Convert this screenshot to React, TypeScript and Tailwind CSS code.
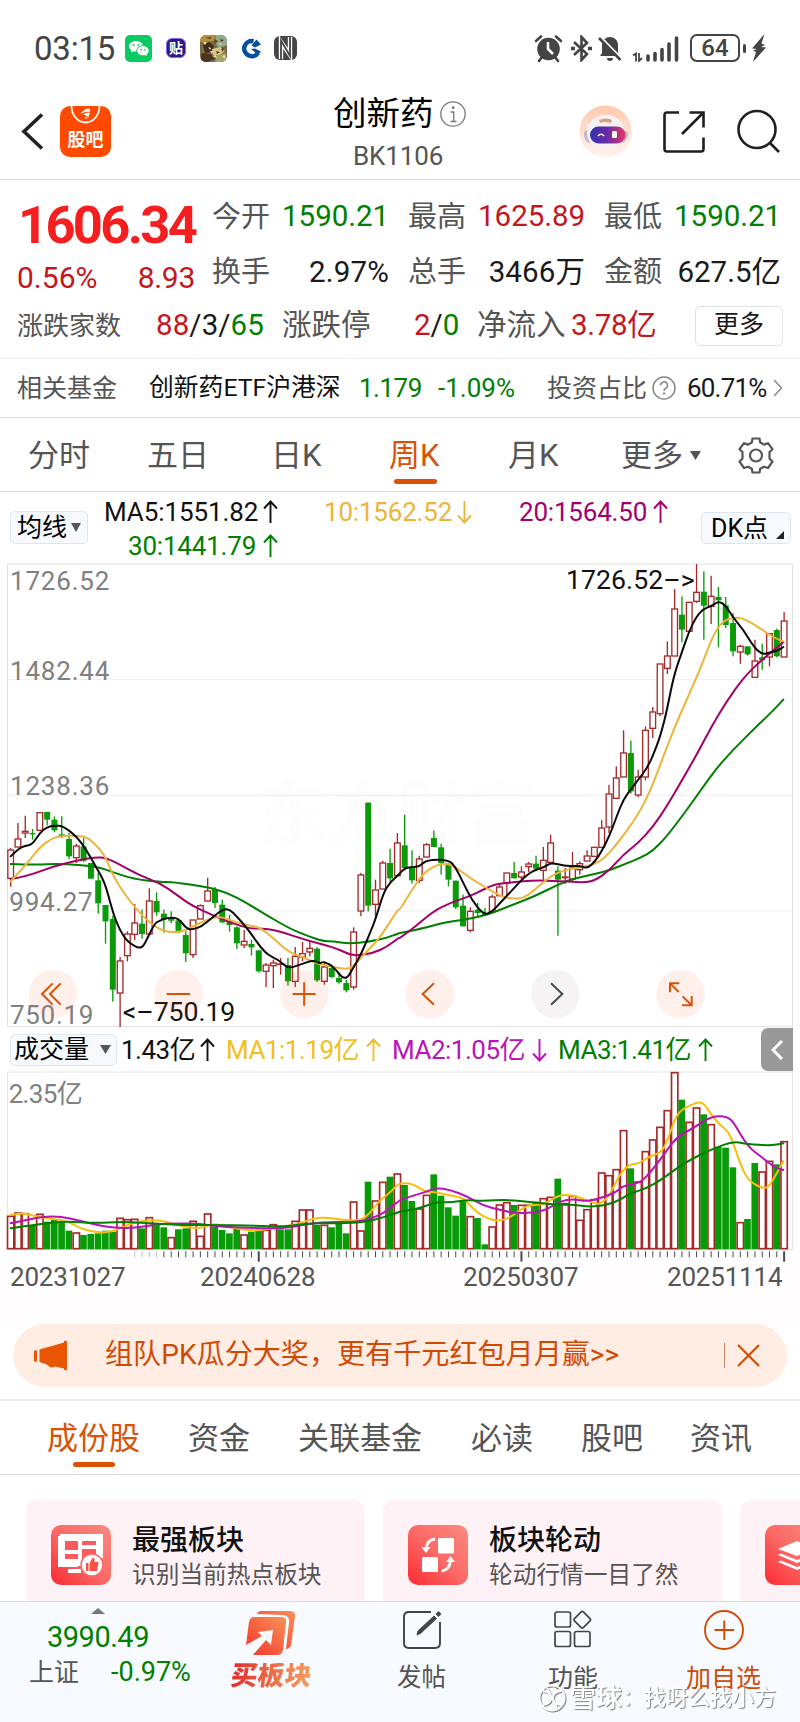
import React from "react";

type Candle = ["r" | "g", number, number, number, number];

/* Candles: direction, body top, body bottom, high, low (chart units, three per pixel). */
const EARLY: Candle[] = [
  ["r", 211, 296, 205, 321], ["r", 178, 202, 130, 202], ["r", 155, 160, 108, 175], ["g", 160, 164, 148, 180],
  ["r", 99, 152, 99, 152], ["g", 97, 120, 97, 137], ["g", 120, 152, 110, 158], ["g", 164, 170, 110, 175],
  ["g", 178, 230, 160, 238], ["r", 199, 234, 192, 250], ["g", 200, 243, 175, 247], ["g", 250, 297, 250, 297],
  ["g", 302, 371, 280, 402], ["g", 376, 425, 376, 492], ["g", 418, 630, 408, 666], ["r", 544, 640, 532, 742],
  ["r", 463, 528, 455, 545], ["r", 430, 464, 373, 482], ["g", 432, 463, 390, 477], ["r", 364, 463, 326, 463],
  ["g", 364, 398, 338, 408], ["g", 402, 420, 390, 459], ["g", 417, 423, 395, 431], ["g", 422, 455, 418, 460],
  ["g", 466, 521, 455, 547], ["r", 421, 525, 421, 535], ["r", 378, 418, 374, 418], ["r", 334, 364, 294, 364],
  ["g", 328, 370, 322, 385], ["g", 375, 428, 360, 430], ["g", 425, 436, 405, 456], ["g", 443, 491, 440, 508],
  ["r", 485, 496, 450, 505], ["g", 493, 503, 480, 528], ["g", 512, 575, 512, 579], ["r", 556, 575, 550, 622],
  ["r", 550, 558, 540, 625], ["r", 553, 554, 535, 585], ["g", 556, 605, 534, 618], ["r", 530, 605, 502, 622],
  ["r", 522, 532, 487, 545], ["r", 506, 517, 482, 530], ["g", 507, 602, 502, 607], ["r", 562, 605, 545, 615],
  ["g", 565, 592, 555, 595], ["g", 595, 608, 578, 612], ["g", 610, 632, 600, 638], ["r", 457, 622, 443, 630],
  ["r", 286, 394, 280, 410], ["g", 69, 378, 69, 395], ["r", 331, 374, 300, 415], ["r", 250, 328, 243, 328],
  ["g", 250, 296, 207, 305], ["r", 190, 288, 160, 288],
];

const LATE: Candle[] = [
  ["g", 887, 955, 795, 960], ["g", 952, 992, 902, 1002], ["r", 928, 992, 918, 1000], ["r", 885, 922, 880, 922],
  ["g", 865, 892, 842, 892], ["g", 893, 940, 882, 975], ["g", 945, 990, 940, 1010], ["g", 993, 1073, 993, 1078],
  ["g", 1068, 1130, 1035, 1130], ["r", 1085, 1142, 1073, 1148], ["g", 1080, 1090, 1060, 1103], ["g", 1090, 1096, 1075, 1096],
  ["r", 1042, 1085, 1035, 1085], ["r", 1012, 1038, 1005, 1038], ["r", 970, 1000, 970, 1040], ["g", 970, 986, 937, 986],
  ["r", 967, 982, 950, 995], ["r", 943, 951, 937, 968], ["g", 942, 957, 918, 965], ["r", 932, 962, 892, 990],
  ["r", 880, 938, 855, 938], ["g", 963, 990, 950, 1158], ["r", 982, 984, 955, 1003], ["r", 955, 988, 907, 995],
  ["r", 942, 960, 935, 975], ["r", 919, 934, 902, 934], ["r", 893, 920, 893, 920], ["r", 835, 893, 812, 893],
  ["r", 733, 832, 705, 850], ["r", 685, 746, 650, 746], ["r", 610, 682, 542, 682], ["g", 610, 725, 573, 732],
  ["r", 682, 736, 660, 743], ["r", 542, 682, 530, 692], ["r", 487, 536, 472, 565], ["r", 343, 492, 343, 500],
  ["r", 319, 356, 275, 373], ["r", 178, 319, 118, 319], ["g", 195, 240, 140, 278], ["r", 158, 245, 158, 245],
  ["r", 128, 155, 43, 160], ["g", 126, 168, 65, 270], ["r", 140, 170, 78, 223], ["g", 142, 152, 112, 293],
  ["g", 167, 226, 142, 235], ["g", 220, 305, 190, 320], ["r", 290, 307, 285, 342], ["g", 290, 314, 290, 318],
  ["r", 334, 383, 270, 383], ["g", 323, 332, 282, 360], ["r", 252, 322, 252, 350], ["g", 241, 320, 237, 323],
  ["r", 214, 322, 187, 322],
];

const CANDLES: Candle[] = [
  ...EARLY.map(([d, a, b, h, l]): Candle => [d, a + 690, b + 690, h + 690, l + 690]),
  ...LATE,
];

/* Volume bars: direction and top edge. */
const VOL_EARLY =
  "r618 r608 r610 g645 r612 g635 g630 g635 g662 r668 g675 g672 g670 g662 g665 r624 r628 r627 g655 r622 g640 g652 r682 g658 g655 r633 r678 r611 g650 g660 g670 g657 r674 g665 g663 r660 r643 g658 g658 r633 r599 r599 g645 r645 g652 g642 g670 r575 r662 g515 r572 r516 g500 r491";
const VOL_LATE =
  "g735 g783 r806 r765 g703 g767 g802 g827 g780 r829 g834 g913 r860 r794 r787 g795 r795 r795 g785 r775 r771 g716 r790 r768 r840 r808 r778 r698 r706 r688 r571 g685 r725 r634 r599 r561 r511 r397 g479 r546 r503 g523 r553 g620 g623 g682 r847 g837 g669 r695 r663 g673 r604";

const VOLUMES = [
  ...VOL_EARLY.split(" ").map((v) => ({ up: v[0] === "r", top: Number(v.slice(1)) + 210 })),
  ...VOL_LATE.split(" ").map((v) => ({ up: v[0] === "r", top: Number(v.slice(1)) })),
];

function curve(a: string, b: string, shift: number) {
  const parse = (s: string) => s.split(" ").map((p) => p.split(",").map(Number));
  const pts = [
    ...parse(a).map(([x, y]) => [x, y + shift]),
    ...parse(b).map(([x, y]) => [x + 1200, y]),
  ].filter((p, i, all) => i === 0 || p[0] > all[i - 1][0]);
  let d = `M${pts[0][0]} ${pts[0][1]}`;
  for (let i = 1; i < pts.length - 1; i++) {
    const mx = (pts[i][0] + pts[i + 1][0]) / 2;
    const my = (pts[i][1] + pts[i + 1][1]) / 2;
    d += `Q${pts[i][0]} ${pts[i][1]} ${mx} ${my}`;
  }
  const last = pts[pts.length - 1];
  return d + `L${last[0]} ${last[1]}`;
}

const PRICE_LINES: [string, string][] = [
  ["#008000", curve(
    "32,253 100,256 180,252 290,260 340,278 400,298 480,307 520,307 620,322 680,338 740,370 800,407 870,447 920,468 970,485 1000,485 1045,492 1110,486 1160,475 1195,461",
    "0,1150 60,1138 140,1117 200,1110 270,1093 320,1072 400,1042 490,997 540,982 620,965 670,945 720,925 760,903 800,860 850,795 900,725 950,655 1000,600 1060,540 1115,487 1150,450", 690)],
  ["#a3006b", curve(
    "32,298 80,290 160,260 230,243 290,232 320,235 360,255 420,288 480,310 530,345 570,375 640,408 700,432 750,447 780,446 830,452 920,482 1000,502 1045,523 1070,528 1120,520 1160,502 1195,475",
    "0,1165 40,1135 100,1085 150,1060 200,1043 240,1025 280,1005 340,997 400,992 480,994 555,999 590,990 630,960 670,915 715,880 760,830 800,770 850,685 890,615 935,530 980,455 1030,385 1070,345 1110,310 1150,278", 690)],
  ["#ecb53a", curve(
    "32,305 60,275 90,240 120,202 150,180 180,168 240,168 265,175 300,208 320,240 340,290 370,338 410,390 450,430 490,455 540,459 580,440 620,420 660,410 700,425 740,436 780,443 820,475 865,517 910,533 960,555 1000,562 1045,570 1065,555 1100,515 1135,480 1165,435 1195,388",
    "0,1080 30,1030 70,970 105,948 140,940 170,955 210,985 260,1015 300,1040 345,1048 375,1043 410,1015 450,980 490,962 540,953 580,945 610,928 650,885 715,795 755,715 790,620 825,530 860,450 900,360 930,280 955,230 980,208 1020,202 1060,222 1100,250 1130,268 1150,275", 690)],
  ["#0a0a0a", curve(
    "32,230 54,208 75,198 97,195 119,160 141,142 163,137 190,140 230,170 260,212 290,265 315,310 335,385 350,430 370,470 390,492 425,510 445,470 465,430 480,423 500,414 535,414 560,448 580,449 605,440 635,415 670,388 690,390 710,410 745,450 795,522 835,540 865,567 900,555 940,541 960,552 970,545 1000,560 1035,605 1060,565 1085,520 1110,460 1128,415 1150,340 1170,308 1195,286",
    "0,970 15,955 36,952 60,950 80,930 145,930 165,950 190,1000 215,1050 250,1095 275,1088 300,1060 340,1018 375,980 405,960 430,955 453,938 495,950 540,948 562,957 585,935 605,905 630,855 650,800 670,750 692,720 715,690 745,650 770,590 785,545 800,485 822,375 845,310 867,245 890,200 910,178 933,170 955,155 975,165 1000,205 1030,240 1060,290 1086,315 1110,308 1130,305 1150,292", 690)],
];

const VOLUME_LINES: [string, string][] = [
  ["#f5bf0a", curve(
    "32,615 60,608 90,615 140,625 200,632 240,655 290,668 340,665 380,645 430,632 480,630 530,645 570,653 600,655 640,640 680,650 750,662 800,658 860,648 900,640 940,625 980,622 1030,630 1080,633 1110,610 1135,575 1165,552 1190,527",
    "0,730 35,730 80,757 100,755 140,765 190,773 210,797 250,832 300,845 340,827 380,795 430,795 475,765 520,765 570,785 600,795 630,765 660,700 690,672 715,672 750,648 785,638 805,595 825,535 845,508 890,487 910,488 935,525 960,555 985,575 1000,610 1020,670 1043,720 1085,745 1105,742 1125,710 1150,663", 210)],
  ["#b814b8", curve(
    "32,640 80,630 130,620 180,619 240,632 300,648 370,655 420,652 470,643 530,640 600,641 660,650 750,654 820,655 870,653 930,640 1000,635 1060,637 1110,627 1150,610 1180,585 1195,575",
    "0,780 40,767 80,755 110,743 150,750 200,768 250,797 300,810 350,820 400,818 440,810 480,783 520,777 560,785 610,772 650,755 670,737 715,730 740,710 780,660 830,590 880,565 920,537 950,528 980,530 1000,545 1043,620 1090,655 1120,680 1150,690", 210)],
  ["#008000", curve(
    "32,655 120,642 200,633 280,640 370,635 450,640 550,645 650,645 750,647 860,650 920,640 1010,640 1060,638 1100,635 1150,622 1195,607",
    "0,815 60,805 110,785 150,788 200,780 250,783 320,779 400,787 480,795 520,794 570,801 620,795 660,780 690,760 740,745 790,715 830,685 870,660 930,630 1000,604 1043,612 1110,617 1150,610", 210)],
];

const cx = (i: number) => 32 + i * 21.89;

function PriceChart() {
  return (
    <svg className="block h-[465px] w-[800px] overflow-visible" viewBox="0 40 2400 1395">
      <g stroke="#e2e2e2" strokeWidth="3" fill="none">
        <path d="M22.5 43.5H2377.5V1431H22.5Z" />
        <path stroke="#ededed" d="M22 390H2377M22 737H2377M22 1084H2377" />
      </g>
      <text x="770" y="870" fontSize="210" fontWeight="700" fill="#c04040" fillOpacity="0.01" className="font-['Noto_Sans_CJK_SC']">东方财富</text>
      <g fill="#808080" fontSize="78" className="font-[Roboto]">
        <text x="30" y="122" textLength="298">1726.52</text>
        <text x="30" y="390" textLength="298">1482.44</text>
        <text x="30" y="736" textLength="298">1238.36</text>
        <text x="28" y="1084" textLength="250">994.27</text>
        <text x="30" y="1424" textLength="250">750.19</text>
      </g>
      {CANDLES.map(([d, top, bot, hi, lo], i) => {
        const x = cx(i);
        return d === "r" ? (
          <g key={i} stroke="#a52a2a" strokeWidth="4" fill="#fff">
            <path d={`M${x} ${hi}V${lo}`} />
            <rect x={x - 8.5} y={top} width="17" height={Math.max(bot - top, 1)} />
          </g>
        ) : (
          <g key={i} fill="#0a9a0a">
            <rect x={x - 2} y={hi} width="4" height={lo - hi} />
            <rect x={x - 9} y={top} width="18" height={Math.max(bot - top, 4)} />
          </g>
        );
      })}
      <g fill="none" strokeWidth="6" strokeLinejoin="round" strokeLinecap="round">
        {PRICE_LINES.map(([c, d]) => <path key={c} stroke={c} d={d} />)}
      </g>
      <g fill="#111" fontSize="80" className="font-[Roboto]">
        <text x="1698" y="118" textLength="386">1726.52–&gt;</text>
        <text x="368" y="1414" textLength="338">&lt;–750.19</text>
      </g>
      <g fill="#ff5a1e" fillOpacity="0.09">
        <circle cx="159" cy="1333" r="73" /><circle cx="536" cy="1333" r="73" /><circle cx="913" cy="1333" r="73" />
        <circle cx="1289" cy="1333" r="73" /><circle cx="2042" cy="1333" r="73" />
        <circle cx="1666" cy="1333" r="73" fill="#50304a" fillOpacity="0.06" />
      </g>
      <g fill="none" stroke="#d95206" strokeWidth="6">
        <path d="M158 1301L126 1333L158 1365M182 1301L150 1333L182 1365" />
        <path d="M500 1333H570M878 1333H947M912.500 1298V1368" />
        <path d="M1302 1301L1268 1333L1302 1365" />
        <path d="M2036 1327L2010 1301M2010 1328V1301H2038M2048 1340L2074 1366M2046 1367H2075V1339" />
        <path stroke="#4a4a4a" d="M1653 1301L1687 1333L1653 1365" />
      </g>
    </svg>
  );
}

function VolumeChart() {
  return (
    <svg className="block h-[193px] w-[800px]" viewBox="0 393 2400 579">
      <path d="M22.5 396H2377.5V929H22.5Z" fill="none" stroke="#e6e6e6" strokeWidth="3" />
      <text x="26" y="488" textLength="222" fontSize="78" fill="#808080" className="font-[Roboto,'Noto_Sans_CJK_SC']">2.35亿</text>
      {VOLUMES.map(({ up, top }, i) => {
        const x = cx(i);
        return up ? (
          <rect key={i} x={x - 9.500} y={top + 1} width="19" height={925 - top} fill="#fff" stroke="#a52a2a" strokeWidth="5" />
        ) : (
          <rect key={i} x={x - 10.500} y={top} width="20" height={928 - top} fill="#089b08" />
        );
      })}
      <g fill="none" strokeWidth="6" strokeLinejoin="round" strokeLinecap="round">
        {VOLUME_LINES.map(([c, d]) => <path key={c} stroke={c} d={d} />)}
      </g>
      {VOLUMES.map((_, i) =>
        i < 17 ? null : (
          <path key={i} d={`M${cx(i)} 934V${i === 34 || i === 70 || i === 106 ? 965 : 952}`}
            stroke={i < 21 ? "#c4bcc2" : "#4a4a4a"} strokeWidth={i === 34 || i === 70 || i === 106 ? 6 : 3} />
        ),
      )}
    </svg>
  );
}

function StatusBar() {
  return (
    <header className="flex h-[82px] items-center pt-[14px] text-[#444]">
      <span className="ml-[34px] w-[83px] whitespace-nowrap text-[33px] leading-none tracking-[-0.2px]">03:15</span>
      <svg className="ml-[8px] size-[27px]" viewBox="0 0 27 27">
        <rect width="27" height="27" rx="5" fill="#0acb62" />
        <path d="M11 6c-4 0-7 2.300-7 5.300 0 1.700 1 3.100 2.500 4L6 17.500l2.400-1.200c1 .3 2 .3 2.800.3 0-4 3.300-6 6.800-6C17.500 8 14.500 6 11 6Z" fill="#fff" />
        <path d="M18 11.200c-3.300 0-5.800 2-5.800 4.500s2.500 4.600 5.800 4.600c.7 0 1.300-.1 1.900-.3l2.100 1-.5-1.900c1.300-.8 2.200-2 2.200-3.400 0-2.500-2.500-4.500-5.700-4.500Z" fill="#fff" />
        <g fill="#0acb62"><circle cx="8.600" cy="10" r="1" /><circle cx="13.300" cy="10" r="1" /><circle cx="16.100" cy="14.600" r=".9" /><circle cx="20" cy="14.600" r=".9" /></g>
      </svg>
      <div className="ml-[14px] flex h-[20px] w-[20px] items-center justify-center rounded-[6px] border border-[#8b63f0] bg-[#2b1c86] text-[14px] font-bold leading-none text-white">贴</div>
      <svg className="ml-[14px] size-[27px]" viewBox="0 0 27 27">
        <defs><clipPath id="thumb"><rect width="27" height="27" rx="6" /></clipPath></defs>
        <g clipPath="url(#thumb)">
          <rect width="27" height="27" fill="#7b6a45" />
          <path d="M0 0h16l-2 6-14 1Z" fill="#b98f3a" /><path d="M16 0h11v10l-8 3-4-5Z" fill="#93a98c" />
          <path d="M3 10l6-3 5 4-2 6-7 1Z" fill="#3e2c1c" /><path d="M12 14l8-2 5 4-5 4-7 0Z" fill="#d9c489" />
          <path d="M2 18l9 1 4 5-8 3H0Z" fill="#4c331d" /><path d="M17 20l9-2v9H15Z" fill="#a5a468" />
          <path d="M8 12l3 1-1 2zM18 9l3-1 1 2zM12 21l4-1 1 3zM3 7l4 0-2 3zM10 16l3 0-1 3zM22 21l3-1v4z" fill="#efe0b0" />
          <path d="M21 14l3-1-1 4zM5 3l6-1v2zM14 4l4 2-3 3zM20 4l4 1-3 2zM16 16l4 1-3 2z" fill="#55432a" />
        </g>
      </svg>
      <svg className="ml-[14px] size-[21px]" viewBox="0 0 21 21">
        <path d="M12.500 3.200A7.600 7.600 0 1 0 17 15" fill="none" stroke="#07509c" strokeWidth="4.500" />
        <path d="M15.500 1.500L20 6.500L14 9.500L10.500 7.500ZM10 11L14 10.500L20 13.500L17 17Z" fill="#07509c" />
      </svg>
      <svg className="ml-[11px] h-[26px] w-[25px]" viewBox="0 0 25 26">
        <rect x="1" y="1" width="23" height="24" rx="6" fill="#444" />
        <path d="M8 24V7L17 20V2" fill="none" stroke="#fff" strokeWidth="4.400" /><path d="M8 24V5.500L17 21V2" fill="none" stroke="#444" strokeWidth="1.800" />
      </svg>
      <svg className="ml-[236px] size-[29px]" viewBox="0 0 29 29">
        <circle cx="14.500" cy="15" r="11.300" fill="#444" />
        <path d="M14 8v7l5 5" stroke="#fff" strokeWidth="2.600" fill="none" />
        <path d="M2 7l5-4.500M27 7l-5-4.500M5 27l3-4M24 27l-3-4" stroke="#444" strokeWidth="2.600" strokeLinecap="round" />
      </svg>
      <svg className="ml-[8px] h-[27px] w-[21px]" viewBox="0 0 21 27" fill="none" stroke="#444" strokeWidth="2.600">
        <path d="M3 7l13 12-5.500 6v-23L16 8 3 20" /><path d="M0 13.500h4M17 13.500h4" strokeWidth="3.500" />
      </svg>
      <svg className="ml-[6px] h-[28px] w-[24px]" viewBox="0 0 24 28">
        <path d="M2 22l2-3v-8C4 6 8 3 12 3s8 3 8 8v8l2 3ZM9 24h6a3 3 0 0 1-6 0Z" fill="#444" />
        <path d="M2 2.500L24 25" stroke="#fff" strokeWidth="2.500" /><path d="M1 4L22.500 26" stroke="#444" strokeWidth="2.600" />
      </svg>
      <svg className="ml-[10px] h-[27px] w-[47px]" viewBox="0 0 47 27" stroke="#444" fill="none">
        <path d="M1 20.500l3-2v8M7 18v8l3-3" strokeWidth="1.800" />
        <path d="M16 25v-4M23 25v-6.500M30 25V14.500M37 25V9M44.500 25V3" strokeWidth="3.600" strokeLinecap="round" />
      </svg>
      <div className="ml-[11px] flex h-[28px] w-[50px] shrink-0 items-center justify-center rounded-[7px] border-2 border-[#444] text-[24px] font-medium leading-none">64</div>
      <div className="ml-[3px] h-[9px] w-[3px] shrink-0 rounded-sm bg-[#444]" />
      <svg className="ml-[6px] h-[28px] w-[14px] shrink-0" viewBox="0 0 14 28"><path d="M12.500 0L0 14.500l5 .5-4 1.500 3 1.500L1 28 14 13.500l-5-.5 4-2-3.500-1.500Z" fill="#444" /></svg>
    </header>
  );
}

function Header() {
  return (
    <div className="flex h-[98px] items-start border-b border-[#d9d9d9]">
      <svg className="ml-[20px] mt-[29px] h-[42px] w-[26px]" viewBox="0 0 26 42"><path d="M22 3.500L4 20.500L22 37.500" fill="none" stroke="#222" strokeWidth="3.600" /></svg>
      <svg className="ml-[14px] mt-[24px] size-[51px]" viewBox="0 0 51 51">
        <rect width="51" height="51" rx="10" fill="#ff4a00" />
        <path d="M11.500 0a14 16.500 0 0 0 28 0" fill="none" stroke="#fff" strokeWidth="1.800" />
        <path d="M20 8C23 4 27 2 30 2.500L30 6C26 5 23 7 20 8ZM23 9C26 6 29 6 30 7L28 12C27 9 25 9 23 9ZM24.500 11L27 11 26.500 13.500Z" fill="#fff" />
        <text x="7.500" y="40" fontSize="18" fontWeight="700" fill="#fff" textLength="36" className="font-['Noto_Sans_CJK_SC']">股吧</text>
      </svg>
      <div className="ml-[222px] w-[134px]">
        <div className="mt-[15px] flex h-[34px] items-center text-black">
          <span className="w-[101px] whitespace-nowrap text-[33.500px] leading-none">创新药</span>
          <svg className="ml-[6px] size-[26px] shrink-0" viewBox="0 0 26 26" fill="none" stroke="#777" strokeWidth="1.300">
            <circle cx="13" cy="13" r="12.200" /><circle cx="13.200" cy="6.700" r="1.400" fill="#777" stroke="none" /><path d="M10.500 11H13.700V20.500M10.500 20.500h6" />
          </svg>
        </div>
        <div className="ml-[20px] mt-[12px] whitespace-nowrap text-[26px] leading-none tracking-[-0.1px] text-[#555]">BK1106</div>
      </div>
      <svg className="ml-[112px] mt-[23px] size-[53px]" viewBox="0 0 53 53">
        <defs>
          <linearGradient id="halo" x2="0" y2="1"><stop stopColor="#ffc9ab" /><stop offset="1" stopColor="#fff5f0" /></linearGradient>
          <linearGradient id="visor"><stop stopColor="#3531b0" /><stop offset=".5" stopColor="#6b2aa8" /><stop offset="1" stopColor="#e43a60" /></linearGradient>
        </defs>
        <circle cx="26.500" cy="26.500" r="26" fill="url(#halo)" />
        <path d="M5 16l4 2v5ZM48 16l-4 2v5Z" fill="#efe7ee" />
        <path d="M5 29c0-3 2-4 5-4h32c5 0 7 2 7 4s-2 9-7 9H11c-4 0-6-5-6-9Z" fill="#bdb7ca" />
        <path d="M8 28C8 16 17 10 27 10s18 6 19 18c1 9-7 15-19 15S8 38 8 28Z" fill="#f4f1f5" />
        <path d="M20 15q7-3 13 0l-1 3q-6-2-11 0Z" fill="#d4a27c" />
        <rect x="11" y="21.500" width="35.500" height="17" rx="8.500" fill="url(#visor)" />
        <path d="M19 31q3-3.500 6 0" stroke="#fff" strokeWidth="1.600" fill="none" /><rect x="33" y="26" width="5" height="7" rx="1.500" fill="#fff" />
      </svg>
      <svg className="ml-[30px] mt-[28px] size-[44px]" viewBox="0 0 44 44" fill="none" stroke="#1f1f1f" strokeWidth="2.600">
        <path d="M17 2.500H5Q2.500 2.500 2.500 5V39Q2.500 41.500 5 41.500H39Q41.500 41.500 41.500 39V27.500" /><path d="M20 24L41 3M27.500 2.500H41.500V17.500" />
      </svg>
      <svg className="ml-[29px] mt-[26px] size-[46px]" viewBox="0 0 46 46" fill="none" stroke="#1f1f1f" strokeWidth="2.600">
        <circle cx="22" cy="21.500" r="18.500" /><path d="M35 35L44 44" />
      </svg>
    </div>
  );
}

function Pair({ label, value, tone }: { label: string; value: string; tone: string }) {
  return (
    <div className="flex h-[54px] w-[177px] items-center justify-between whitespace-nowrap leading-none">
      <span className="text-[29px] text-[#555]">{label}</span>
      <span className={`text-[29.500px] ${tone}`}>{value}</span>
    </div>
  );
}

function Quote() {
  return (
    <section className="h-[179px] border-b border-[#efefef] pt-[9px]">
      <div className="flex">
        <div className="ml-[18px] w-[178px] shrink-0 pt-[7px]">
          <div className="flex h-[59px] items-center whitespace-nowrap text-[52.500px] font-bold leading-none tracking-[-2.700px] text-[#f51f1f]">1606.34</div>
          <div className="flex h-[46px] items-center justify-between whitespace-nowrap text-[30px] leading-none text-[#c4161c]">
            <span className="-ml-px">0.56%</span><span className="mr-px tracking-[-0.300px]">8.93</span>
          </div>
        </div>
        <div className="ml-[16px] flex w-[570px] flex-wrap gap-x-[19px] pt-px">
          <Pair label="今开" value="1590.21" tone="text-[#008000] tracking-[-0.050px]" />
          <Pair label="最高" value="1625.89" tone="text-[#c4161c] tracking-[-0.050px]" />
          <Pair label="最低" value="1590.21" tone="text-[#008000] tracking-[-0.050px]" />
          <Pair label="换手" value="2.97%" tone="text-[#1a1a1a] tracking-[0.200px]" />
          <Pair label="总手" value="3466万" tone="text-[#1a1a1a] tracking-[0.100px]" />
          <Pair label="金额" value="627.5亿" tone="text-[#1a1a1a]" />
        </div>
      </div>
      <div className="-mt-[2px] flex h-[54px] items-center whitespace-nowrap text-[29.500px] leading-none text-[#555]">
        <span className="ml-[17px] w-[104px] text-[26px]">涨跌家数</span>
        <span className="ml-[35px] w-[108px] tracking-[0.100px] text-[#1a1a1a]"><span className="text-[#c4161c]">88</span>/3/<span className="text-[#008000]">65</span></span>
        <span className="ml-[18px] w-[89px]">涨跌停</span>
        <span className="ml-[43px] w-[45px] text-[#1a1a1a]"><span className="text-[#c4161c]">2</span>/<span className="text-[#008000]">0</span></span>
        <span className="ml-[18px] w-[89px]">净流入</span>
        <span className="ml-[5px] w-[86px] tracking-[-0.300px] text-[#c4161c]">3.78亿</span>
        <span className="ml-[38px] flex h-[40px] w-[88px] items-center justify-center rounded-[5px] border border-[#dfe2e6] pb-[3px] text-[25px] text-[#1a1a1a]">更多</span>
      </div>
    </section>
  );
}

function FundRow() {
  return (
    <section className="flex h-[59px] items-center whitespace-nowrap border-b border-[#d9d9d9] text-[25px] leading-none text-[#555]">
      <span className="ml-[17px] w-[100px]">相关基金</span>
      <span className="ml-[32px] w-[192px] text-[24.800px] text-[#111]">创新药ETF沪港深</span>
      <span className="ml-[18px] w-[62px] text-[26px] tracking-[-0.500px] text-[#008000]">1.179</span>
      <span className="ml-[17px] w-[80px] text-[26px] text-[#008000]">-1.09%</span>
      <span className="ml-[29px] w-[100px]">投资占比</span>
      <svg className="ml-[5px] size-[24px]" viewBox="0 0 24 24" fill="none" stroke="#888" strokeWidth="1.500"><circle cx="12" cy="12" r="11" /><path d="M8.500 9.500a3.500 3.500 0 1 1 5 3c-1 .6-1.500 1.200-1.500 2.500" /><path d="M12 16.500v2" strokeWidth="2" /></svg>
      <span className="ml-[11px] w-[80px] text-[26px] tracking-[-0.800px] text-[#1a1a1a]">60.71%</span>
      <svg className="ml-[6px] h-[18px] w-[10px]" viewBox="0 0 10 18" fill="none" stroke="#888" strokeWidth="1.500"><path d="M1 1l7.500 8L1 17" /></svg>
    </section>
  );
}

function PeriodTabs() {
  return (
    <nav className="flex h-[74px] items-center whitespace-nowrap border-b border-[#d9d9d9] pt-[2px] text-[31px] leading-none text-[#555]">
      <span className="ml-[28px] w-[119px]">分时</span>
      <span className="w-[124px]">五日</span>
      <span className="w-[118px]">日K</span>
      <span className="relative w-[119px] text-[#d95206]">周K<span className="absolute left-[5px] top-[39px] h-[5px] w-[43px] rounded-full bg-[#d95206]" /></span>
      <span className="w-[113px]">月K</span>
      <span className="w-[62px]">更多</span>
      <svg className="ml-[7px] h-[9px] w-[11px]" viewBox="0 0 11 9"><path d="M0 0h11L5.500 9Z" fill="#555" /></svg>
      <svg className="ml-[36px] size-[38px]" viewBox="0 0 38 38" fill="none" stroke="#555" strokeWidth="2.200" strokeLinejoin="round">
        <path d="M15.500 1.500H22.500L23.200 5.500L27 7.600L31 6.200L35.500 12.200L32.500 15V21.500L35.500 24.500L31 31L27 29.700L23.200 31.800L22.500 35.500H15.500L14.800 31.800L11 29.700L7 31L2.500 24.500L5.500 21.500V15L2.500 12.200L7 6.200L11 7.600L14.800 5.500Z" /><circle cx="19" cy="18.500" r="6" />
      </svg>
    </nav>
  );
}

function Arrow({ down }: { down?: boolean }) {
  return (
    <svg className="h-[24px] w-[15px] shrink-0" viewBox="0 0 15 24" fill="none" stroke="currentColor" strokeWidth="1.900">
      <path d={down ? "M7.500 1V22M1 15.500L7.500 22.500L14 15.500" : "M7.500 23V2M1 8.500L7.500 1.500L14 8.500"} />
    </svg>
  );
}

function Legend() {
  return (
    <section className="flex h-[71px] text-[26px] leading-none">
      <div className="ml-[10px] mt-[19px] flex h-[33px] w-[78px] items-center rounded-[5px] border border-[#e0e6ee] bg-[#f6faff] pl-[6px] text-[25px] text-black">
        <span className="whitespace-nowrap">均线</span>
        <svg className="ml-[4px] h-[9px] w-[10px]" viewBox="0 0 10 9"><path d="M0 0h10L5 9Z" fill="#555" /></svg>
      </div>
      <div className="ml-[16px] w-[580px] whitespace-nowrap">
        <div className="flex h-[40px] items-center">
          <span className="w-[154px] tracking-[-0.100px] text-[#111]">MA5:1551.82</span><span className="ml-[5px] text-[#111]"><Arrow /></span>
          <span className="ml-[46px] w-[130px] tracking-[-0.200px] text-[#ecb53a]">10:1562.52</span><span className="ml-[3px] text-[#ecb53a]"><Arrow down /></span>
          <span className="ml-[47px] w-[130px] tracking-[-0.200px] text-[#a3006b]">20:1564.50</span><span className="ml-[4px] text-[#a3006b]"><Arrow /></span>
        </div>
        <div className="flex h-[28px] items-center text-[#008000]">
          <span className="ml-[24px] w-[130px] tracking-[-0.200px]">30:1441.79</span><span className="ml-[5px]"><Arrow /></span>
        </div>
      </div>
      <div className="ml-[17px] mt-[20px] flex h-[32px] w-[90px] items-center whitespace-nowrap rounded-[5px] border border-[#e0e6ee] bg-[#f6faff] pl-[9px] text-[25px] text-black">
        DK点<svg className="ml-[8px] mt-[14px] size-[8px]" viewBox="0 0 8 8"><path d="M8 0V8H0Z" fill="#222" /></svg>
      </div>
    </section>
  );
}

function VolumeBar() {
  return (
    <div className="flex h-[43px] items-center whitespace-nowrap text-[26px] leading-none">
      <div className="ml-[10px] flex h-[32px] w-[107px] shrink-0 items-center rounded-[5px] border border-[#e0e6ee] bg-[#f6faff] pl-[3px] text-[25px] text-black">
        成交量<svg className="ml-[11px] h-[9px] w-[11px]" viewBox="0 0 11 9"><path d="M0 0h11L5.500 9Z" fill="#555" /></svg>
      </div>
      <span className="ml-[4px] w-[74px] tracking-[-0.500px] text-[#111]">1.43亿</span><span className="ml-[5px] text-[#111]"><Arrow /></span>
      <span className="ml-[11px] w-[134px] tracking-[-0.500px] text-[#f0c020]">MA1:1.19亿</span><span className="ml-[6px] text-[#f0c020]"><Arrow /></span>
      <span className="ml-[11px] w-[134px] tracking-[-0.500px] text-[#b814b8]">MA2:1.05亿</span><span className="ml-[6px] text-[#b814b8]"><Arrow down /></span>
      <span className="ml-[11px] w-[134px] tracking-[-0.500px] text-[#008000]">MA3:1.41亿</span><span className="ml-[6px] text-[#008000]"><Arrow /></span>
      <div className="ml-[48px] flex h-[43px] w-[32px] shrink-0 items-center justify-center rounded-l-[7px] bg-[#999]">
        <svg className="h-[20px] w-[12px]" viewBox="0 0 12 20" fill="none" stroke="#fff" strokeWidth="3"><path d="M11 1L2 10l9 9" /></svg>
      </div>
    </div>
  );
}

function Banner() {
  return (
    <div className="ml-[13px] flex h-[63px] w-[774px] items-center whitespace-nowrap rounded-full bg-[#ffede4] text-[28.100px] leading-none text-[#d04a04]">
      <svg className="ml-[20px] h-[29px] w-[35px]" viewBox="0 0 35 29" fill="#ea5504"><path d="M1 9.500h3v11H1ZM6.500 8.500L31 1.500V0h3v29h-3v-1.500L22 25.500q-4 2.500-8-2l-7.500-2.500Z" /></svg>
      <span className="ml-[37px] w-[514px]">组队PK瓜分大奖，更有千元红包月月赢&gt;&gt;</span>
      <span className="ml-[105px] h-[25px] w-px bg-[#c88a66]" />
      <svg className="ml-[11px] size-[25px]" viewBox="0 0 25 25" fill="none" stroke="#d04a04" strokeWidth="2"><path d="M2 2L23 23M23 2L2 23" /></svg>
    </div>
  );
}

function InfoTabs() {
  return (
    <nav className="mt-[12px] flex h-[76px] items-center whitespace-nowrap border-b border-t-2 border-b-[#d9d9d9] border-t-[#ececec] pt-[2px] text-[31px] leading-none text-[#555]">
      <span className="relative ml-[47px] w-[141px] text-[#d95206]">成份股<span className="absolute left-[26px] top-[39px] h-[5px] w-[42px] rounded-full bg-[#d95206]" /></span>
      <span className="w-[110px]">资金</span>
      <span className="w-[173px]">关联基金</span>
      <span className="w-[110px]">必读</span>
      <span className="w-[109px]">股吧</span>
      <span>资讯</span>
    </nav>
  );
}

function FeatureCard({ title, text, children }: { title: string; text: string; children?: React.ReactNode }) {
  return (
    <div className="flex h-[101px] w-[339px] shrink-0 items-start rounded-t-[12px] bg-[#fff2f6] pl-[25px] pt-[25px]">
      <svg className="size-[60px] shrink-0" viewBox="0 0 60 60">
        <defs><linearGradient id="tile" x1="1" y1="0" x2="0" y2="1"><stop stopColor="#f98a80" /><stop offset=".5" stopColor="#fb6a66" /><stop offset="1" stopColor="#fb2a31" /></linearGradient></defs>
        <rect width="60" height="60" rx="10" fill="url(#tile)" />
        {children}
      </svg>
      <div className="ml-[21px] mt-[2px] whitespace-nowrap leading-none">
        <div className="text-[28px] font-medium text-[#111]">{title}</div>
        <div className="mt-[9px] text-[23.700px] text-[#555]">{text}</div>
      </div>
    </div>
  );
}

function BottomNav() {
  return (
    <footer className="relative flex h-[121px] whitespace-nowrap border-t border-[#d9dde1] bg-[#f7fbff] text-[25px] leading-none text-[#555]">
      <div className="ml-[29px] w-[166px]">
        <svg className="ml-[62px] mt-[6px] block h-[6px] w-[14px]" viewBox="0 0 14 6"><path d="M7 0L14 6H0Z" fill="#777" /></svg>
        <div className="ml-[18px] mt-[9px] text-[29px] tracking-[-0.500px] text-[#008000]">3990.49</div>
        <div className="mt-[7px] flex items-center text-[25px]"><span>上证</span><span className="ml-[32px] text-[27px] text-[#008000]">-0.97%</span></div>
      </div>
      <div className="ml-[35px] w-[84px]">
        <svg className="ml-[16px] mt-[7px] block h-[48px] w-[52px]" viewBox="0 0 52 48">
          <defs><linearGradient id="buy" x1="1" y1="0" x2="0" y2="1"><stop stopColor="#f5935a" /><stop offset="1" stopColor="#f5332a" /></linearGradient></defs>
          <path d="M11 5q1-3 4-3h29q6 0 5 6l-4 28q-1 4-5 4l3-26q1-8-7-8Z" fill="url(#buy)" />
          <path d="M8 8h27q6 0 5 6l-3 27q-1 5-6 5H7l13-15 5 5 2-15-15 2 4 4L0 36 3 13q1-5 5-5Z" fill="url(#buy)" />
        </svg>
        <div className="ml-px mt-[6px] w-[83px] -skew-x-6 bg-gradient-to-r from-[#e0262e] to-[#f5a060] bg-clip-text text-[26.800px] font-black leading-[26px] text-transparent">买板块</div>
      </div>
      <div className="ml-[83px] w-[50px]">
        <svg className="ml-[5px] mt-[8px] block size-[40px]" viewBox="0 0 40 40" fill="none" stroke="#444" strokeWidth="1.900">
          <path d="M29 2H7Q2 2 2 7V33Q2 38 7 38H33Q38 38 38 33V12" /><path d="M15 25l1-4L32 6l2.500 2.500L19 23Z" fill="#444" strokeWidth="1" /><path d="M35 5.500l3-3" strokeWidth="4" />
        </svg>
        <div className="mt-[16px] text-[24.500px]">发帖</div>
      </div>
      <div className="ml-[101px] w-[50px]">
        <svg className="ml-[6px] mt-[8px] block size-[40px]" viewBox="0 0 40 40" fill="none" stroke="#444" strokeWidth="1.700">
          <rect x="1" y="2" width="15.500" height="15" rx="2" /><rect x="1" y="21.500" width="15.500" height="15" rx="2" /><rect x="20.500" y="21.500" width="15.500" height="15" rx="2" />
          <rect x="22" y="3.500" width="12.500" height="12.500" rx="1.500" transform="rotate(45 28.250 9.750)" />
        </svg>
        <div className="mt-[16px]">功能</div>
      </div>
      <div className="ml-[88px] w-[76px] text-[#d04a04]">
        <svg className="ml-[18px] mt-[8px] block size-[40px]" viewBox="0 0 40 40" fill="none" stroke="#d04a04" strokeWidth="1.900"><circle cx="20" cy="20" r="19" /><path d="M10.500 20H30M20.250 10.500V30" /></svg>
        <div className="mt-[16px]">加自选</div>
      </div>
      <div className="absolute left-[538px] top-[82px] flex items-center text-[22px] font-medium text-white opacity-90 [text-shadow:1px_1px_1px_#777]">
        <svg className="size-[28px] drop-shadow-[1px_1px_0.500px_#777]" viewBox="0 0 28 28" fill="none" stroke="#fff" strokeWidth="2"><circle cx="14" cy="14" r="12.500" /><path d="M5 7q8 1 8 7t-8 7M23 7q-8 1-8 7t8 7M9 4l10 20" /></svg>
        <span className="ml-[4px] text-[26px]">雪球</span><span>：找呀么找小方</span>
      </div>
    </footer>
  );
}

export default function App() {
  return (
    <main className="h-[1722px] w-[800px] overflow-hidden bg-white font-[Roboto,'Noto_Sans_CJK_SC',sans-serif]">
      <StatusBar />
      <Header />
      <Quote />
      <FundRow />
      <PeriodTabs />
      <Legend />
      <PriceChart />
      <VolumeBar />
      <VolumeChart />
      <div className="flex h-[60px] whitespace-nowrap bg-[#fffdfe] text-[26px] leading-none tracking-[-0.200px] text-[#555]">
        <span className="ml-[10px] w-[190px]">20231027</span>
        <span className="w-[263px]">20240628</span>
        <span className="w-[204px]">20250307</span>
        <span>20251114</span>
      </div>
      <Banner />
      <InfoTabs />
      <div className="flex gap-[18px] overflow-hidden pl-[26px] pt-[25px]">
        <FeatureCard title="最强板块" text="识别当前热点板块">
          <path d="M9 11H50V33M9 11V40H27M17 46H30" fill="none" stroke="#fff" strokeWidth="4" />
          <path d="M9 11H50V32H31V41H9Z" fill="#fff" />
          <g fill="#fa5a58"><rect x="14" y="16" width="13" height="9" /><rect x="31" y="16" width="14" height="4" /><rect x="31" y="24" width="14" height="9" /><rect x="14" y="29" width="13" height="5" /></g>
          <circle cx="41" cy="40" r="11" fill="#fff" stroke="#fa6a66" strokeWidth="1.500" />
          <path d="M35 38h2.500v8H35ZM38.500 38l3-5q2-1 2 1.500V37h4l-1.500 9h-7.500Z" fill="#fa5048" />
        </FeatureCard>
        <FeatureCard title="板块轮动" text="轮动行情一目了然">
          <g fill="#fff"><rect x="30" y="13" width="16" height="15.500" rx="1.500" /><rect x="14" y="32" width="16" height="15" rx="1.500" /><path d="M13.500 22h9l-4.500 6ZM38 37h9l-4.500-6Z" /></g>
          <path d="M27 14q-8 1-9 10M33.500 46q8-1 9-10" fill="none" stroke="#fff" strokeWidth="2.800" />
        </FeatureCard>
        <FeatureCard title="" text="">
          <g fill="#fff"><path d="M13 24L32 16L50 24L32 31Z" /><path d="M13 30l3-1.500 16 6.500 16-6.500 3 1.500-19 8ZM13 37l3-1.500L32 42l16-6.500 3 1.500-19 8Z" /></g>
        </FeatureCard>
      </div>
      <BottomNav />
    </main>
  );
}
